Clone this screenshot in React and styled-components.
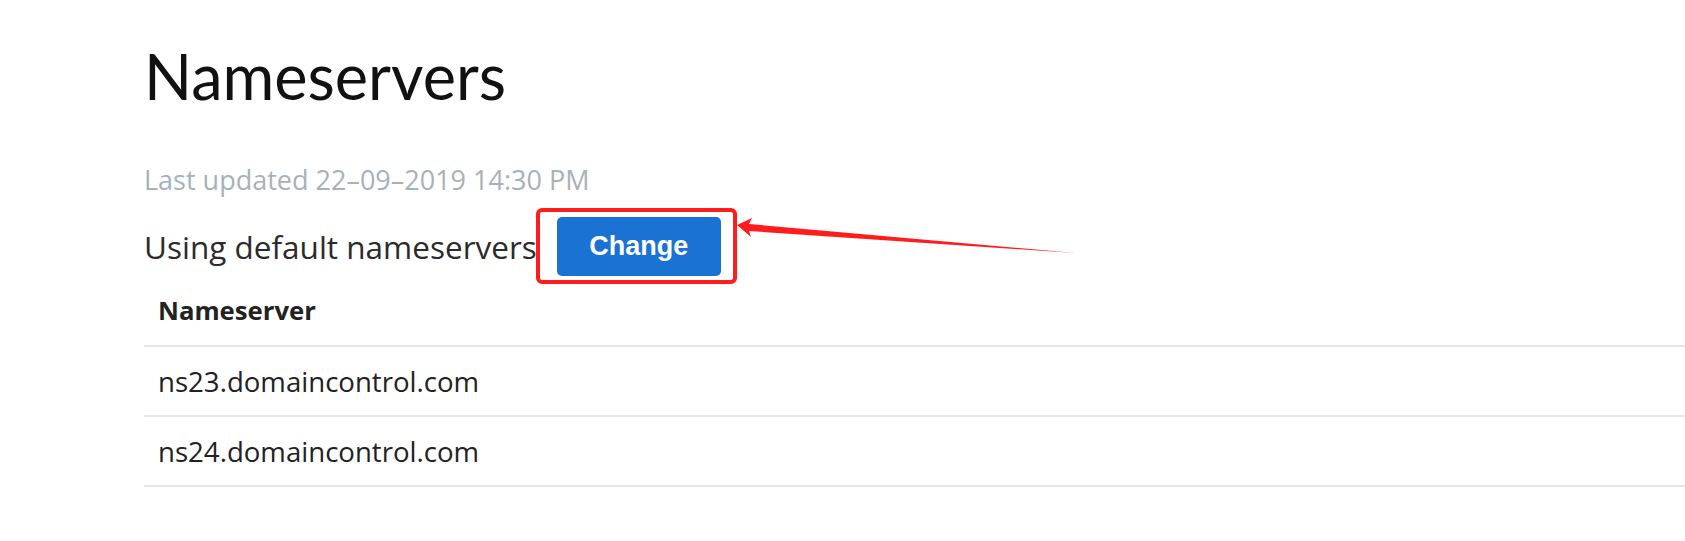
import React from 'react';
import styled, { createGlobalStyle } from 'styled-components';

const GlobalStyle = createGlobalStyle`
  body {
    margin: 0;
    background: #fff;
    font-family: "Open Sans", "Noto Sans", sans-serif;
    color: #1b1b1b;
  }
`;

const Page = styled.div`
  padding: 38px 0 0 144px;
  display: flex;
  flex-direction: column;
`;

const Title = styled.h1`
  margin: 0;
  font-family: Lato, "Open Sans", sans-serif;
  font-size: 63px;
  font-weight: 400;
  line-height: 76px;
  color: #111;
`;

const Updated = styled.div`
  margin-top: 50px;
  font-size: 27px;
  line-height: 32px;
  color: #a7b1bb;
`;

const StatusRow = styled.div`
  margin-top: 21px;
  display: flex;
  align-items: center;
  gap: 20px;
`;

const StatusText = styled.span`
  font-size: 31.5px;
  color: #2b2b2b;
`;

const Highlight = styled.div`
  position: relative;
  display: flex;
  &::before {
    content: '';
    position: absolute;
    left: -21px;
    right: -16px;
    top: -9px;
    bottom: -8px;
    border: 4px solid #ff1c1c;
    border-radius: 6px;
  }
`;

const Button = styled.button`
  width: 164px;
  height: 59px;
  border: none;
  border-radius: 5px;
  background: #1a73d3;
  color: #fff;
  font-family: "Liberation Sans", Arial, sans-serif;
  font-weight: 700;
  font-size: 27px;
  cursor: pointer;
`;

const Arrow = styled.svg`
  position: absolute;
  left: 180px;
  top: -1px;
  overflow: visible;
`;

const Table = styled.div`
  margin-top: 17px;
  display: flex;
  flex-direction: column;
`;

const Cell = styled.div`
  height: 68px;
  padding-left: 14px;
  display: flex;
  align-items: center;
  border-bottom: 2px solid #e6e6e6;
  font-size: ${p => (p.$head ? '25.7px' : '27.6px')};
  font-weight: ${p => (p.$head ? 700 : 400)};
  color: #222;
`;

const HeadCell = styled(Cell)`
  height: auto;
  padding-bottom: 17px;
`;

const nameservers = ['ns23.domaincontrol.com', 'ns24.domaincontrol.com'];

export default function App() {
  return (
    <>
      <GlobalStyle />
      <Page>
        <Title>Nameservers</Title>
        <Updated>Last updated 22–09–2019 14:30 PM</Updated>
        <StatusRow>
          <StatusText>Using default nameservers</StatusText>
          <Highlight>
            <Button>Change</Button>
            <Arrow width="340" height="40" viewBox="0 0 340 40">
              <polygon points="0,9 15,2 12,8 338,37 12,15 14,21" fill="#ff1c1c" />
            </Arrow>
          </Highlight>
        </StatusRow>
        <Table>
          <HeadCell $head>Nameserver</HeadCell>
          {nameservers.map(ns => (
            <Cell key={ns}>{ns}</Cell>
          ))}
        </Table>
      </Page>
    </>
  );
}
